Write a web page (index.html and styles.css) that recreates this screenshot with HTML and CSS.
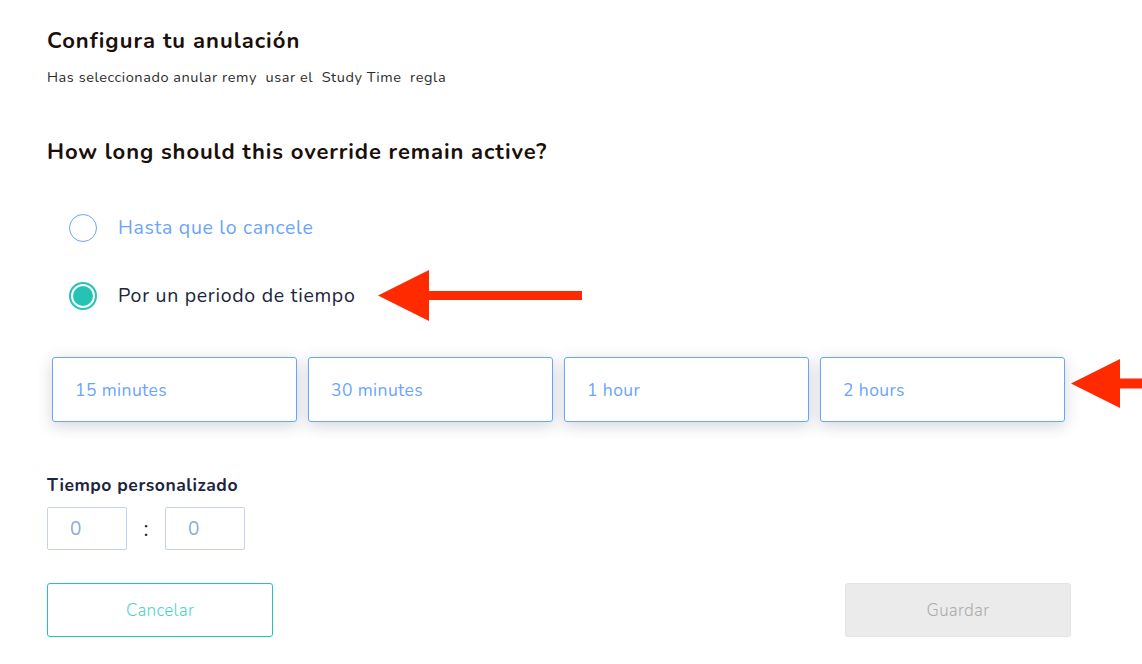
FILE: index.html
```html
<!DOCTYPE html>
<html lang="es">
<head>
<meta charset="utf-8">
<title>Configura tu anulación</title>
<link rel="stylesheet" href="styles.css">
</head>
<body>
<main class="page">
  <h1 class="title">Configura tu anulación</h1>
  <p class="subtitle">Has seleccionado anular remy&nbsp; usar el&nbsp; Study Time&nbsp; regla</p>

  <h2 class="question">How long should this override remain active?</h2>

  <div class="radios">
    <label class="radio-row">
      <span class="radio"></span>
      <span class="radio-text radio-text-off">Hasta que lo cancele</span>
    </label>
    <label class="radio-row">
      <span class="radio radio-on"><span class="dot"></span></span>
      <span class="radio-text radio-text-on">Por un periodo de tiempo</span>
      <span class="arrow arrow-one">
        <svg width="204" height="51" viewBox="0 0 204 51"><polygon points="0,25.5 51,0 51,21 204,21 204,30 51,30 51,51" fill="#ff2a00"/></svg>
      </span>
    </label>
  </div>

  <div class="presets">
    <button class="preset">15 minutes</button>
    <button class="preset">30 minutes</button>
    <button class="preset">1 hour</button>
    <button class="preset">2 hours</button>
    <span class="arrow arrow-two">
      <svg width="71" height="49" viewBox="0 0 71 49"><polygon points="0,24.5 49,0 49,19.5 71,19.5 71,29.5 49,29.5 49,49" fill="#ff2a00"/></svg>
    </span>
  </div>

  <div class="custom">
    <div class="custom-label">Tiempo personalizado</div>
    <div class="custom-inputs">
      <div class="time-box">0</div>
      <span class="colon">:</span>
      <div class="time-box">0</div>
    </div>
  </div>

  <div class="footer">
    <button class="btn btn-cancel">Cancelar</button>
    <button class="btn btn-save">Guardar</button>
  </div>
</main>
</body>
</html>
```

FILE: styles.css
```css
* { box-sizing: border-box; }

html, body {
  margin: 0;
  padding: 0;
  background: #ffffff;
}

body {
  font-family: "Nunito", "Lato", "Noto Sans", sans-serif;
  width: 1142px;
  height: 664px;
  overflow: hidden;
}

.page {
  width: 1142px;
  padding: 29px 71px 0 47px;
}

.title {
  margin: 0;
  font-size: 22px;
  line-height: 24px;
  font-weight: 700;
  letter-spacing: 1px;
  color: #1a0f0a;
}

.subtitle {
  margin: 15px 0 0;
  font-size: 14.5px;
  line-height: 18px;
  letter-spacing: 0.55px;
  color: #2b2b2b;
}

.question {
  margin: 53px 0 0;
  font-size: 22px;
  line-height: 26px;
  font-weight: 700;
  letter-spacing: 0.9px;
  color: #1a0f0a;
}

.radios {
  margin-top: 49px;
  padding-left: 22px;
  display: flex;
  flex-direction: column;
  gap: 40px;
}

.radio-row {
  position: relative;
  display: flex;
  align-items: center;
  height: 28px;
  gap: 21px;
}

.radio {
  width: 28px;
  height: 28px;
  border-radius: 50%;
  border: 1.5px solid #6aa5fb;
  display: flex;
  align-items: center;
  justify-content: center;
  flex: none;
}

.radio-on {
  border: 2px solid #23c4b4;
}

.dot {
  width: 20px;
  height: 20px;
  border-radius: 50%;
  background: #23c4b4;
}

.radio-text {
  font-size: 19.5px;
  line-height: 28px;
  letter-spacing: 0.7px;
}

.radio-text-off { color: #6aa5fb; }
.radio-text-on { color: #20243d; }

.arrow {
  position: absolute;
  display: block;
  line-height: 0;
}

.arrow-one {
  left: 309px;
  top: -12px;
}

.presets {
  position: relative;
  margin: 47px 6px 0 5px;
  display: flex;
  gap: 11px;
}

.preset {
  flex: 1;
  height: 65px;
  background: #ffffff;
  border: 1px solid #6aa5fb;
  border-radius: 3px;
  box-shadow: 0 4px 16px rgba(40, 50, 90, 0.2);
  text-align: left;
  padding: 0 0 0 22px;
  font-family: inherit;
  font-size: 17.5px;
  letter-spacing: 0.4px;
  color: #6aa5fb;
}

.arrow-two {
  left: 1019px;
  top: 2px;
}

.custom {
  margin-top: 53px;
}

.custom-label {
  font-size: 17.5px;
  line-height: 20px;
  font-weight: 700;
  letter-spacing: 0.55px;
  color: #20243d;
}

.custom-inputs {
  margin-top: 12px;
  display: flex;
  align-items: center;
  gap: 0;
}

.time-box {
  width: 80px;
  height: 43px;
  border: 1px solid #c6d2ec;
  border-radius: 2px;
  padding-left: 22px;
  display: flex;
  align-items: center;
  font-size: 19px;
  color: #8aa8dc;
}

.colon {
  width: 38px;
  text-align: center;
  font-size: 22px;
  color: #20243d;
}

.footer {
  margin-top: 33px;
  display: flex;
  justify-content: space-between;
}

.btn {
  width: 226px;
  height: 54px;
  border-radius: 3px;
  font-family: inherit;
  font-size: 17px;
  font-weight: 300;
  letter-spacing: 0.3px;
}

.btn-cancel {
  background: #ffffff;
  border: 1.5px solid #23c4b4;
  color: #4fd4c5;
}

.btn-save {
  background: #ebebeb;
  border: 1px solid #e4e4e4;
  color: #ababab;
}
```
